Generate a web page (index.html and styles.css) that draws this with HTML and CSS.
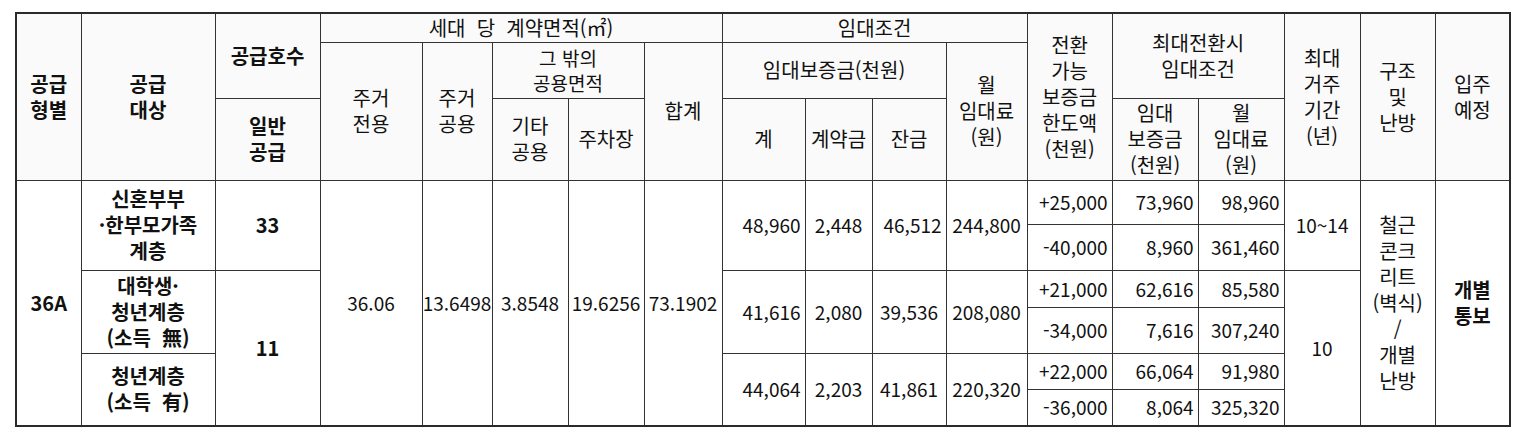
FILE: index.html
```html
<!DOCTYPE html>
<html lang="ko">
<head>
<meta charset="utf-8">
<title>공급 현황</title>
<link rel="stylesheet" href="styles.css">
</head>
<body>
<div class="wrap">
<table class="supply">
<colgroup>
<col class="c65"><col class="c134"><col class="c105"><col class="c102"><col class="c70"><col class="c76"><col class="c76"><col class="c78"><col class="c83"><col class="c67"><col class="c74"><col class="c81"><col class="c85"><col class="c86"><col class="c86"><col class="c76"><col class="c75"><col class="c75">
</colgroup>
<thead>
<tr class="h1">
<th rowspan="3" class="b">공급<br>형별</th>
<th rowspan="3" class="b">공급<br>대상</th>
<th rowspan="2" class="b">공급호수</th>
<th colspan="5">세대&nbsp; 당&nbsp; 계약면적(㎡)</th>
<th colspan="4">임대조건</th>
<th rowspan="3">전환<br>가능<br>보증금<br>한도액<br>(천원)</th>
<th colspan="2" rowspan="2">최대전환시<br>임대조건</th>
<th rowspan="3">최대<br>거주<br>기간<br>(년)</th>
<th rowspan="3">구조<br>및<br>난방</th>
<th rowspan="3">입주<br>예정</th>
</tr>
<tr class="h2">
<th rowspan="2">주거<br>전용</th>
<th rowspan="2">주거<br>공용</th>
<th colspan="2" class="tight">그 밖의<br>공용면적</th>
<th rowspan="2">합계</th>
<th colspan="3">임대보증금(천원)</th>
<th rowspan="2">월<br>임대료<br>(원)</th>
</tr>
<tr class="h3">
<th class="b">일반<br>공급</th>
<th>기타<br>공용</th>
<th>주차장</th>
<th>계</th>
<th>계약금</th>
<th>잔금</th>
<th>임대<br>보증금<br>(천원)</th>
<th>월<br>임대료<br>(원)</th>
</tr>
</thead>
<tbody>
<tr class="r1">
<td rowspan="6" class="b kr">36A</td>
<td rowspan="2" class="b kr">신혼부부<br>·한부모가족<br>계층</td>
<td rowspan="2" class="b kr">33</td>
<td rowspan="6">36.06</td>
<td rowspan="6">13.6498</td>
<td rowspan="6">3.8548</td>
<td rowspan="6">19.6256</td>
<td rowspan="6">73.1902</td>
<td rowspan="2" class="num">48,960</td>
<td rowspan="2">2,448</td>
<td rowspan="2" class="num">46,512</td>
<td rowspan="2">244,800</td>
<td class="num">+25,000</td>
<td class="num">73,960</td>
<td class="num">98,960</td>
<td rowspan="2">10~14</td>
<td rowspan="6" class="kr struct">철근<br>콘크<br>리트<br>(벽식)<br>/<br>개별<br>난방</td>
<td rowspan="6" class="b kr">개별<br>통보</td>
</tr>
<tr class="r2">
<td class="num">-40,000</td>
<td class="num">8,960</td>
<td class="num">361,460</td>
</tr>
<tr class="r3">
<td rowspan="2" class="b kr">대학생·<br>청년계층<br>(소득&nbsp; 無)</td>
<td rowspan="4" class="b kr">11</td>
<td rowspan="2" class="num">41,616</td>
<td rowspan="2">2,080</td>
<td rowspan="2">39,536</td>
<td rowspan="2">208,080</td>
<td class="num">+21,000</td>
<td class="num">62,616</td>
<td class="num">85,580</td>
<td rowspan="4">10</td>
</tr>
<tr class="r4">
<td class="num">-34,000</td>
<td class="num">7,616</td>
<td class="num">307,240</td>
</tr>
<tr class="r5">
<td rowspan="2" class="b kr">청년계층<br>(소득&nbsp; 有)</td>
<td rowspan="2" class="num">44,064</td>
<td rowspan="2">2,203</td>
<td rowspan="2">41,861</td>
<td rowspan="2">220,320</td>
<td class="num">+22,000</td>
<td class="num">66,064</td>
<td class="num">91,980</td>
</tr>
<tr class="r6">
<td class="num">-36,000</td>
<td class="num">8,064</td>
<td class="num">325,320</td>
</tr>
</tbody>
</table>
</div>
</body>
</html>
```
FILE: styles.css
```css
html, body {
  margin: 0;
  padding: 0;
  background: #ffffff;
}
.wrap {
  padding: 12px 0 0 15px;
}
.supply {
  border-collapse: collapse;
  table-layout: fixed;
  width: 1494px;
  border: 2px solid #2a2a2a;
  font-family: "Noto Sans CJK KR", sans-serif;
  font-size: 20px;
  line-height: 26px;
  color: #111111;
}
.supply th,
.supply td {
  border: 1px solid #333333;
  padding: 0;
  text-align: center;
  vertical-align: middle;
  font-weight: 400;
  overflow: visible;
  white-space: nowrap;
}
.supply th {
  background: #fafafa;
}
.supply td {
  background: #ffffff;
  font-size: 19px;
}
.supply td.kr {
  font-size: 20px;
}
.supply .b {
  font-weight: 700;
}
.supply .num {
  text-align: right;
  padding-right: 4px;
}
.supply .tight {
  line-height: 25px;
  font-size: 19px;
}
.h1 { height: 29px; }
.h2 { height: 56px; }
.h3 { height: 82px; }
.r1 { height: 44px; }
.r2 { height: 46px; }
.r3 { height: 37px; }
.r4 { height: 46px; }
.r5 { height: 36px; }
.r6 { height: 37px; }
.c65 { width: 65px; }
.c134 { width: 134px; }
.c105 { width: 105px; }
.c102 { width: 102px; }
.c70 { width: 70px; }
.c76 { width: 76px; }
.c78 { width: 78px; }
.c83 { width: 83px; }
.c67 { width: 67px; }
.c74 { width: 74px; }
.c81 { width: 81px; }
.c85 { width: 85px; }
.c86 { width: 86px; }
.c75 { width: 75px; }
```
